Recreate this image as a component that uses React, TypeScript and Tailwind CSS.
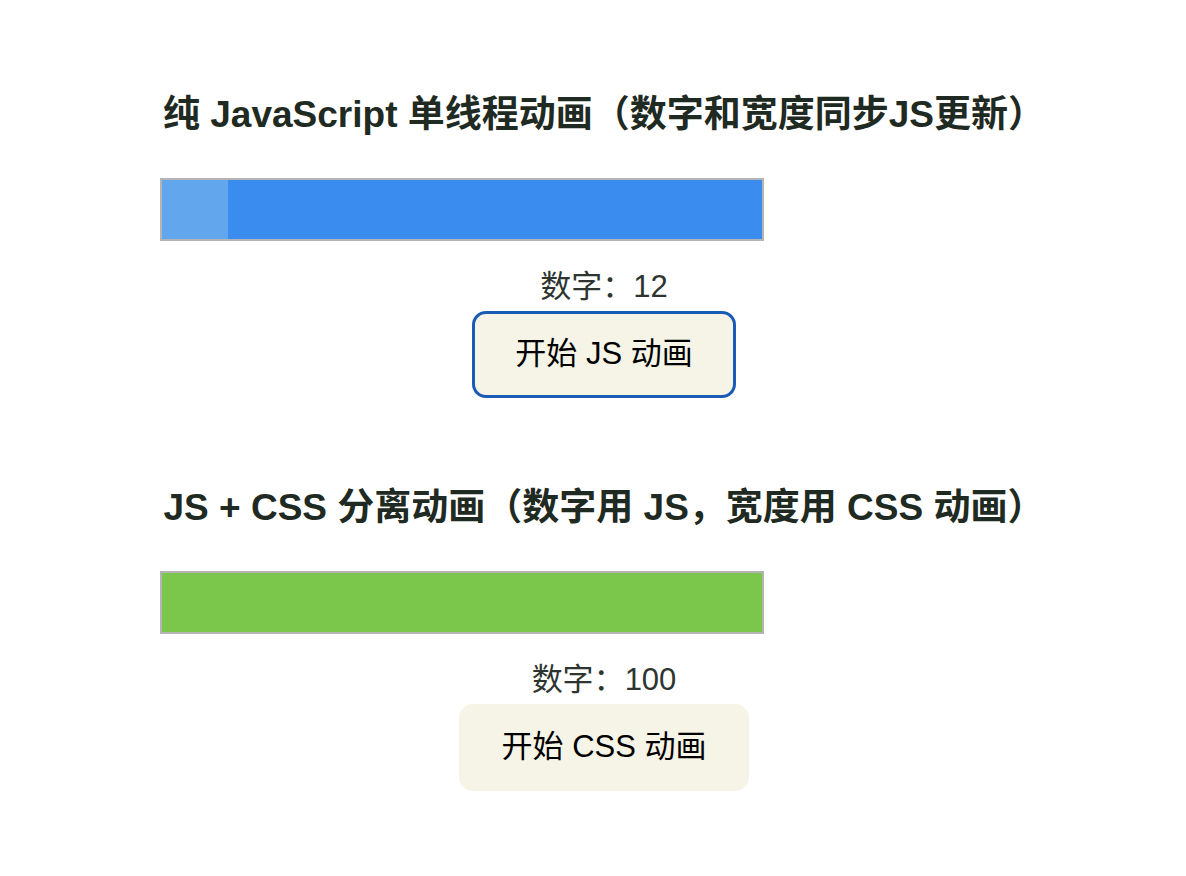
import { useState } from 'react'

const font = { fontFamily: '"Liberation Sans", "Noto Sans CJK SC", sans-serif' }

function Section({
  title,
  fill,
  number,
  label,
  focused,
}: {
  title: string
  fill: React.ReactNode
  number: number
  label: string
  focused?: boolean
}) {
  return (
    <section className="flex flex-col">
      <h2 className="text-center text-[37px] leading-[42px] font-bold text-[#1f2a22] whitespace-nowrap">{title}</h2>
      {/* Progress bar */}
      <div className="mt-[42px] w-[604px] h-[63px] border-2 border-[#b4b4b4] flex">{fill}</div>
      <p className="mt-[28px] text-center text-[31px] leading-[36px] text-[#2e3530]">
        数字：{number}
      </p>
      <button
        className={`self-center mt-[6px] h-[87px] px-[40px] rounded-[14px] bg-[#f5f4e6] text-[31px] text-black ${
          focused ? 'border-[3px] border-[#1a5bb5]' : 'border-[3px] border-[#f5f4e6]'
        }`}
      >
        {label}
      </button>
    </section>
  )
}

export default function App() {
  const [jsValue] = useState(12)
  const [cssValue] = useState(100)

  return (
    <div className="min-h-screen bg-white pl-[160px] pt-[94px]" style={font}>
      <div className="w-[888px] flex flex-col gap-[89px]">
        <Section
          title="纯 JavaScript 单线程动画（数字和宽度同步JS更新）"
          fill={
            <>
              <div className="w-[66px] h-full bg-[#62a7ee]" />
              <div className="flex-1 h-full bg-[#3a8cef]" />
            </>
          }
          number={jsValue}
          label="开始 JS 动画"
          focused
        />
        <Section
          title="JS + CSS 分离动画（数字用 JS，宽度用 CSS 动画）"
          fill={<div className="flex-1 h-full bg-[#7ac74b]" />}
          number={cssValue}
          label="开始 CSS 动画"
        />
      </div>
    </div>
  )
}
